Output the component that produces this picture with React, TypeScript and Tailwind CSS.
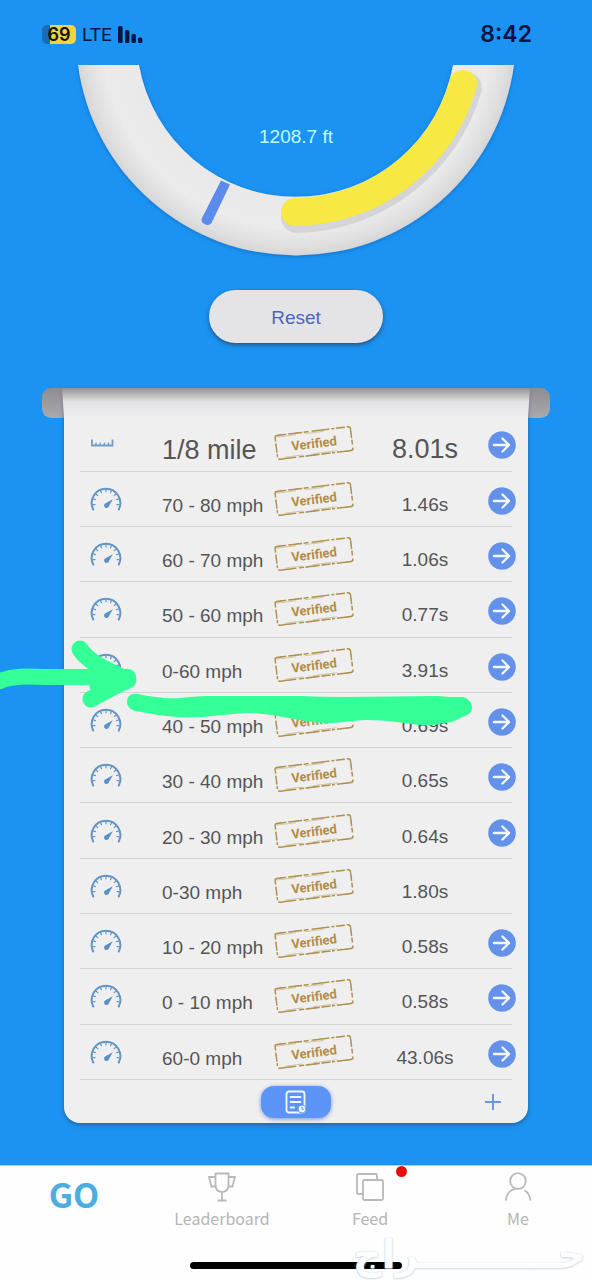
import type { ReactNode } from "react";

type Run = {
  label: string;
  time: string;
  distance?: boolean;
  noDetail?: boolean;
};

const runs: Run[] = [
  { label: "1/8 mile", time: "8.01s", distance: true },
  { label: "70 - 80 mph", time: "1.46s" },
  { label: "60 - 70 mph", time: "1.06s" },
  { label: "50 - 60 mph", time: "0.77s" },
  { label: "0-60 mph", time: "3.91s" },
  { label: "40 - 50 mph", time: "0.69s" },
  { label: "30 - 40 mph", time: "0.65s" },
  { label: "20 - 30 mph", time: "0.64s" },
  { label: "0-30 mph", time: "1.80s", noDetail: true },
  { label: "10 - 20 mph", time: "0.58s" },
  { label: "0 - 10 mph", time: "0.58s" },
  { label: "60-0 mph", time: "43.06s" },
];

function StatusBar() {
  return (
    <header className="flex h-[65px] items-center justify-between pt-1 pr-[60px] pl-[42px] font-[Inter,sans-serif] text-[#0a1440]">
      <div className="flex items-center gap-1.5">
        <span className="flex h-[19px] w-[34px] items-center justify-center rounded-[5px] bg-linear-to-r from-[#1c6bb5] from-25% to-[#f2d53c] to-25% text-lg leading-none font-semibold text-[#15140f]">
          69
        </span>
        <span className="font-[Roboto,sans-serif] text-[19px] leading-none">LTE</span>
        <svg width="28" height="18" viewBox="0 0 28 18" fill="currentColor" aria-hidden="true">
          <rect x="0" y="0" width="4.6" height="17" rx="1.5" />
          <rect x="7" y="4" width="4.4" height="13" rx="1.5" />
          <rect x="13.500" y="8" width="4.4" height="9" rx="1.5" />
          <rect x="20" y="11.5" width="4.4" height="5.5" rx="1.5" />
        </svg>
      </div>
      <span className="text-[23px] leading-none font-semibold">8:42</span>
    </header>
  );
}

function Dial() {
  return (
    <div className="relative flex w-full justify-center">
      <svg width="450" height="200" viewBox="71 65 450 200" aria-hidden="true">
        <defs>
          <radialGradient id="ring" gradientUnits="userSpaceOnUse" cx="296" cy="35.5" r="220">
            <stop offset="0.73" stopColor="#e9e9e9" />
            <stop offset="0.88" stopColor="#ebebeb" />
            <stop offset="0.96" stopColor="#dfdfdf" />
            <stop offset="1" stopColor="#d6d6d8" />
          </radialGradient>
          <filter id="ringShadow" x="-10%" y="-10%" width="120%" height="120%">
            <feDropShadow dx="0" dy="1" stdDeviation="2" floodColor="#0a4f92" floodOpacity="0.5" />
          </filter>
        </defs>
        <path
          filter="url(#ringShadow)"
          fill="url(#ring)"
          d="M78 65 A220 220 0 0 0 514 65 H453 A159.4 159.4 0 0 1 139 65 Z"
        />
        <path d="M221 180.500L230 184.500L211.500 223Q209 226 205.500 224.500Q201 222.500 201.500 219Z" fill="#5c8bee" />
        <path d="M297 217 A181 181 0 0 0 466 88" fill="none" stroke="#d5d4d8" strokeWidth="32" strokeLinecap="round" />
        <path d="M295 212 A176 176 0 0 0 463 84" fill="none" stroke="#f7e844" strokeWidth="28" strokeLinecap="round" />
      </svg>
      <span className="absolute top-[60px] text-[19px] leading-6 text-[#c2fbff]">1208.7 ft</span>
    </div>
  );
}

function RulerIcon() {
  return (
    <svg className="block" width="24" height="8" viewBox="0 0 24 8" fill="none" stroke="#6f9dcc" strokeWidth="1.8" aria-hidden="true">
      <path d="M2 0.500V6.500H22.500V0.500" />
      <path d="M6 3.500V6.500M10.200 3.500V6.500M14.400 3.500V6.500M18.500 3.500V6.500" strokeWidth="1.4" />
    </svg>
  );
}

function GaugeIcon() {
  return (
    <svg className="block" width="32" height="26" viewBox="0 0 32 26" fill="none" stroke="#6394c6" strokeLinecap="round" aria-hidden="true">
      <path d="M3.200 23.500A14.300 14.300 0 1 1 28.800 23.500" strokeWidth="2" />
      <path d="M16 3.500V5.800M10.500 4.800L11.500 6.800M21.500 4.800L20.500 6.800M6.200 8.200L7.800 9.600M25.800 8.200L24.200 9.600M3.500 13L5.500 13.600M28.500 13L26.500 13.600M3.200 18.600H5M28.800 18.600H27" strokeWidth="1.2" />
      <path d="M22.800 13.200L19 20A2.500 2.500 0 1 1 15.500 17.200Z" fill="#5a8fca" stroke="none" />
    </svg>
  );
}

function Stamp() {
  return (
    <span className="relative flex h-[26px] w-[78px] -rotate-[7deg] items-center justify-center font-[Roboto,sans-serif] text-[13px] leading-none font-bold text-[#b18d48]">
      <svg className="absolute inset-0" width="78" height="26" viewBox="0 0 78 26" fill="none" stroke="#b09350" strokeWidth="1.6" aria-hidden="true">
        <rect x="1" y="1" width="76" height="24" rx="2.500" strokeDasharray="9 2 14 1.500 5 3 18 2 3 1.500" />
        <path d="M3 2.600H22M31 2.600H50M8 23.500H26M37 23.500H61" strokeWidth="0.6" opacity="0.7" />
      </svg>
      Verified
    </span>
  );
}

function ArrowIcon() {
  return (
    <svg className="block" width="28" height="28" viewBox="0 0 28 28" fill="none" aria-hidden="true">
      <circle cx="14" cy="14" r="13.800" fill="#6492ea" />
      <path d="M6 14H20.500M14.500 7.500L21 14L14.500 20.500" stroke="#f4f8ff" strokeWidth="2.400" strokeLinecap="round" strokeLinejoin="round" />
    </svg>
  );
}

function ResultsTable() {
  return (
    <table className="h-[664px] w-full table-fixed border-collapse text-[#555557]">
      <colgroup>
        <col className="w-[82px]" />
        <col className="w-[113px]" />
        <col className="w-[79px]" />
        <col />
        <col className="w-6" />
      </colgroup>
      <tbody>
        {runs.map((run) => (
          <tr key={run.label} className="h-[54px] border-b border-[#d3d3d6]">
            <td className="p-0 pl-2.5">{run.distance ? <RulerIcon /> : <GaugeIcon />}</td>
            <th scope="row" className="p-0 pt-3.5 text-left font-normal whitespace-nowrap">
              <span className={run.distance ? "block text-[27px] leading-8" : "block text-[19px] leading-6"}>
                {run.label}
              </span>
            </th>
            <td className="p-0">
              <Stamp />
            </td>
            <td className="p-0 pt-3 pl-2 text-center">
              <span className={run.distance ? "block text-[27px] leading-8" : "block text-[19px] leading-6"}>
                {run.time}
              </span>
            </td>
            <td className="p-0 pt-1">
              {!run.noDetail && (
                <button type="button" aria-label={`Open ${run.label}`} className="block w-7 rounded-full">
                  <ArrowIcon />
                </button>
              )}
            </td>
          </tr>
        ))}
      </tbody>
    </table>
  );
}

function ResultsPaper() {
  return (
    <section className="relative mt-[45px] w-full px-16">
      <div className="absolute inset-x-[42px] top-0 h-[30px] rounded-[9px] bg-linear-to-b from-[#8d8c91] to-[#aaa9ad]" />
      <div className="relative rounded-b-[16px] bg-[#efeff0] px-4 pt-7 shadow-[0_2px_4px_rgba(40,70,110,0.6)]">
        <div className="absolute inset-x-[-2px] top-0 h-[30px] bg-linear-to-b from-[#929195] via-[#e2e2e4] via-45% to-[#efeff0] [clip-path:polygon(0_0,100%_0,calc(100%-2px)_100%,2px_100%)]" />
        <div className="relative">
          <ResultsTable />
        </div>
        <div className="relative flex h-[43px] items-center justify-center">
          <button
            type="button"
            aria-label="Run report"
            className="flex h-8 w-[70px] items-center justify-center rounded-[13px] bg-[#5c94f6] shadow-[0_1px_4px_rgba(70,110,200,0.7)]"
          >
            <svg width="22" height="24" viewBox="0 0 22 24" fill="none" stroke="#f2f8ff" strokeWidth="1.8" strokeLinecap="round" aria-hidden="true">
              <rect x="1.500" y="1.500" width="18" height="21" rx="2.500" />
              <path d="M5.500 7H15.500M5.500 12H15.500M5.500 17.500H9" />
              <circle cx="17" cy="19" r="4" fill="#f2f8ff" stroke="#5c94f6" strokeWidth="1" />
              <path d="M17 17V19.200H18.600" stroke="#5c94f6" strokeWidth="1" />
            </svg>
          </button>
          <button type="button" aria-label="Add" className="absolute right-[11px]">
            <svg width="16" height="16" viewBox="0 0 16 16" stroke="#6c98dd" strokeWidth="2" aria-hidden="true">
              <path d="M8 0V16M0 8H16" />
            </svg>
          </button>
        </div>
      </div>
    </section>
  );
}

function TabIcon({ children }: { children: ReactNode }) {
  return (
    <svg width="30" height="30" viewBox="0 0 30 30" fill="none" stroke="#b9b9b9" strokeWidth="1.8" aria-hidden="true">
      {children}
    </svg>
  );
}

const tabs = [
  {
    label: "Leaderboard",
    icon: (
      <TabIcon>
        <path d="M8.500 1.500H21.500V12.500C21.500 17.500 19 20 15 20C11 20 8.500 17.500 8.500 12.500Z" />
        <path d="M8.500 5H2L4.500 14.500H8.800M21.500 5H28L25.500 14.500H21.200M15 20V28.500M10.500 28.500H19.500" />
      </TabIcon>
    ),
  },
  {
    label: "Feed",
    icon: (
      <TabIcon>
        <path d="M8 22H3.500Q2 22 2 20.500V3.500Q2 2 3.500 2H20.500Q22 2 22 3.500V8" />
        <rect x="8" y="8" width="20" height="20" rx="1.500" />
      </TabIcon>
    ),
    unread: true,
  },
  {
    label: "Me",
    icon: (
      <TabIcon>
        <circle cx="15" cy="9" r="7.800" />
        <path d="M2.800 28.500C3.500 22 7.500 17.500 13 16.700M21.500 18.500C25 20.500 27 24 27.500 28.500" />
      </TabIcon>
    ),
  },
];

function TabBar() {
  return (
    <nav className="relative h-[115px] border-t border-[#a9cdef] bg-[#fefefe] font-['Noto_Sans_CJK_SC',sans-serif]">
      <div className="grid grid-cols-4 pt-1.5">
        <a href="#go" className="pt-0.5 text-center text-[34px] leading-10 font-bold text-[#4bade0]">
          GO
        </a>
        {tabs.map((tab) => (
          <a key={tab.label} href={`#${tab.label.toLowerCase()}`} className="flex flex-col items-center text-base leading-6 text-[#b5b5b5]">
            <span className="relative">
              {tab.icon}
              {tab.unread && <span className="absolute -top-1.5 -right-[22px] size-[11px] rounded-full bg-[#e60d0d]" />}
            </span>
            <span className="mt-1">{tab.label}</span>
          </a>
        ))}
      </div>
      <div className="absolute bottom-[11px] left-1/2 h-[7px] w-[212px] -translate-x-1/2 rounded-full bg-black" />
      <span
        dir="rtl"
        className="pointer-events-none absolute right-1.5 bottom-1 font-['DejaVu_Sans',sans-serif] text-[40px] leading-[44px] font-bold text-[#fbfdfe] [text-shadow:0_0_1px_#b4bfc6,0_1px_2px_#d3dbe0]"
      >
        حــــــــــراج
      </span>
    </nav>
  );
}

// Freehand marker strokes pointing at the 0-60 run
function Marker() {
  return (
    <svg className="pointer-events-none absolute top-[635px] left-0" width="480" height="95" viewBox="0 635 480 95" fill="none" aria-hidden="true">
      <g stroke="#35ff97" strokeWidth="17" strokeLinecap="round" strokeLinejoin="round">
        <path d="M0 681C12 676 26 676 45 677H128" strokeWidth="16" />
        <path d="M80 649C88 662 106 670 128 680C114 686 104 692 91 699" />
        <path d="M98 670L122 680L98 686Z" />
      </g>
      <path
        fill="#35ff97"
        d="M127 702C127 696 131 693 138 694C152 697 166 699 180 698C190 697 198 696 207 696H300C345 698 390 696 437 696C446 697 455 697 463 697C469 699 472 703 472 707C472 711 470 714 467 715C459 718 454 723 443 723C436 725 428 726 420 725C402 723 387 720 367 720C354 720 343 723 330 723C320 723 310 722 300 720C282 717 266 713 247 713C224 714 200 719 177 717C162 716 147 713 136 711C130 710 127 706 127 702Z"
      />
    </svg>
  );
}

export default function App() {
  return (
    <div className="relative flex min-h-screen flex-col bg-[#1b93f3] font-['Liberation_Sans',Arial,sans-serif]">
      <StatusBar />
      <main className="flex flex-1 flex-col items-center pb-[42px]">
        <Dial />
        <button
          type="button"
          className="mt-[25px] h-[53px] w-[174px] rounded-full bg-[#e4e4e6] pt-0.5 text-[19px] leading-6 text-[#4b66bd] shadow-[0_2px_4px_rgba(40,60,90,0.75)]"
        >
          Reset
        </button>
        <ResultsPaper />
      </main>
      <TabBar />
      <Marker />
    </div>
  );
}
